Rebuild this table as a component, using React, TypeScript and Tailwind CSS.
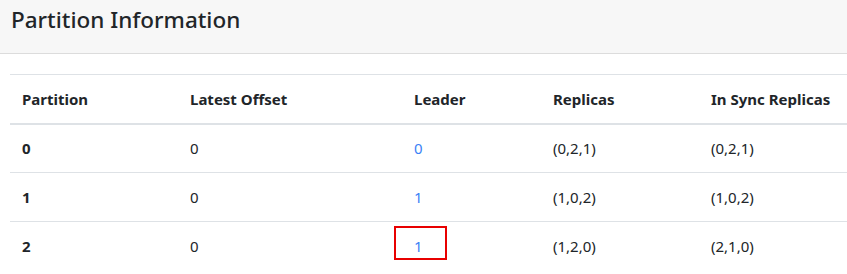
import React from "react";

const rows = [
  { partition: "0", offset: "0", leader: "0", replicas: "(0,2,1)", isr: "(0,2,1)" },
  { partition: "1", offset: "0", leader: "1", replicas: "(1,0,2)", isr: "(1,0,2)" },
  { partition: "2", offset: "0", leader: "1", replicas: "(1,2,0)", isr: "(2,1,0)" },
];

export default function App() {
  return (
    <div
      className="w-[847px] h-[274px] overflow-hidden bg-white text-[#212529]"
      style={{ fontFamily: '"Noto Sans", "Open Sans", sans-serif' }}
    >
      {/* card header */}
      <div className="h-[54px] bg-[#f7f7f7] border-b border-[#dcdcdc] pl-[11px] pt-[4px]">
        <h4 className="text-[22.5px] leading-[32px] font-medium">Partition Information</h4>
      </div>

      <div className="pl-[10px] pt-[20px]">
        <table className="w-[900px] border-collapse text-[15px] table-fixed">
          <colgroup>
            <col className="w-[168px]" />
            <col className="w-[224px]" />
            <col className="w-[139px]" />
            <col className="w-[158px]" />
            <col />
          </colgroup>
          <thead>
            <tr className="border-t border-[#dee2e6] border-b-2">
              {["Partition", "Latest Offset", "Leader", "Replicas", "In Sync Replicas"].map((h) => (
                <th key={h} className="text-left font-bold px-[12px] h-[49px] align-middle whitespace-nowrap">
                  {h}
                </th>
              ))}
            </tr>
          </thead>
          <tbody>
            {rows.map((r, i) => (
              <tr key={r.partition} className={i < rows.length - 1 ? "border-b border-[#dee2e6]" : ""}>
                <td className="px-[12px] h-[49px] font-bold">{r.partition}</td>
                <td className="px-[12px]">{r.offset}</td>
                <td className="px-[12px]">
                  {i === 2 ? (
                    <span className="relative inline-block text-[#3b82f6]">
                      {r.leader}
                      <span className="absolute left-[-20px] top-[-9px] w-[53px] h-[34px] border-2 border-[#e80000]" />
                    </span>
                  ) : (
                    <span className="text-[#3b82f6]">{r.leader}</span>
                  )}
                </td>
                <td className="px-[12px]">{r.replicas}</td>
                <td className="px-[12px]">{r.isr}</td>
              </tr>
            ))}
          </tbody>
        </table>
      </div>
    </div>
  );
}
